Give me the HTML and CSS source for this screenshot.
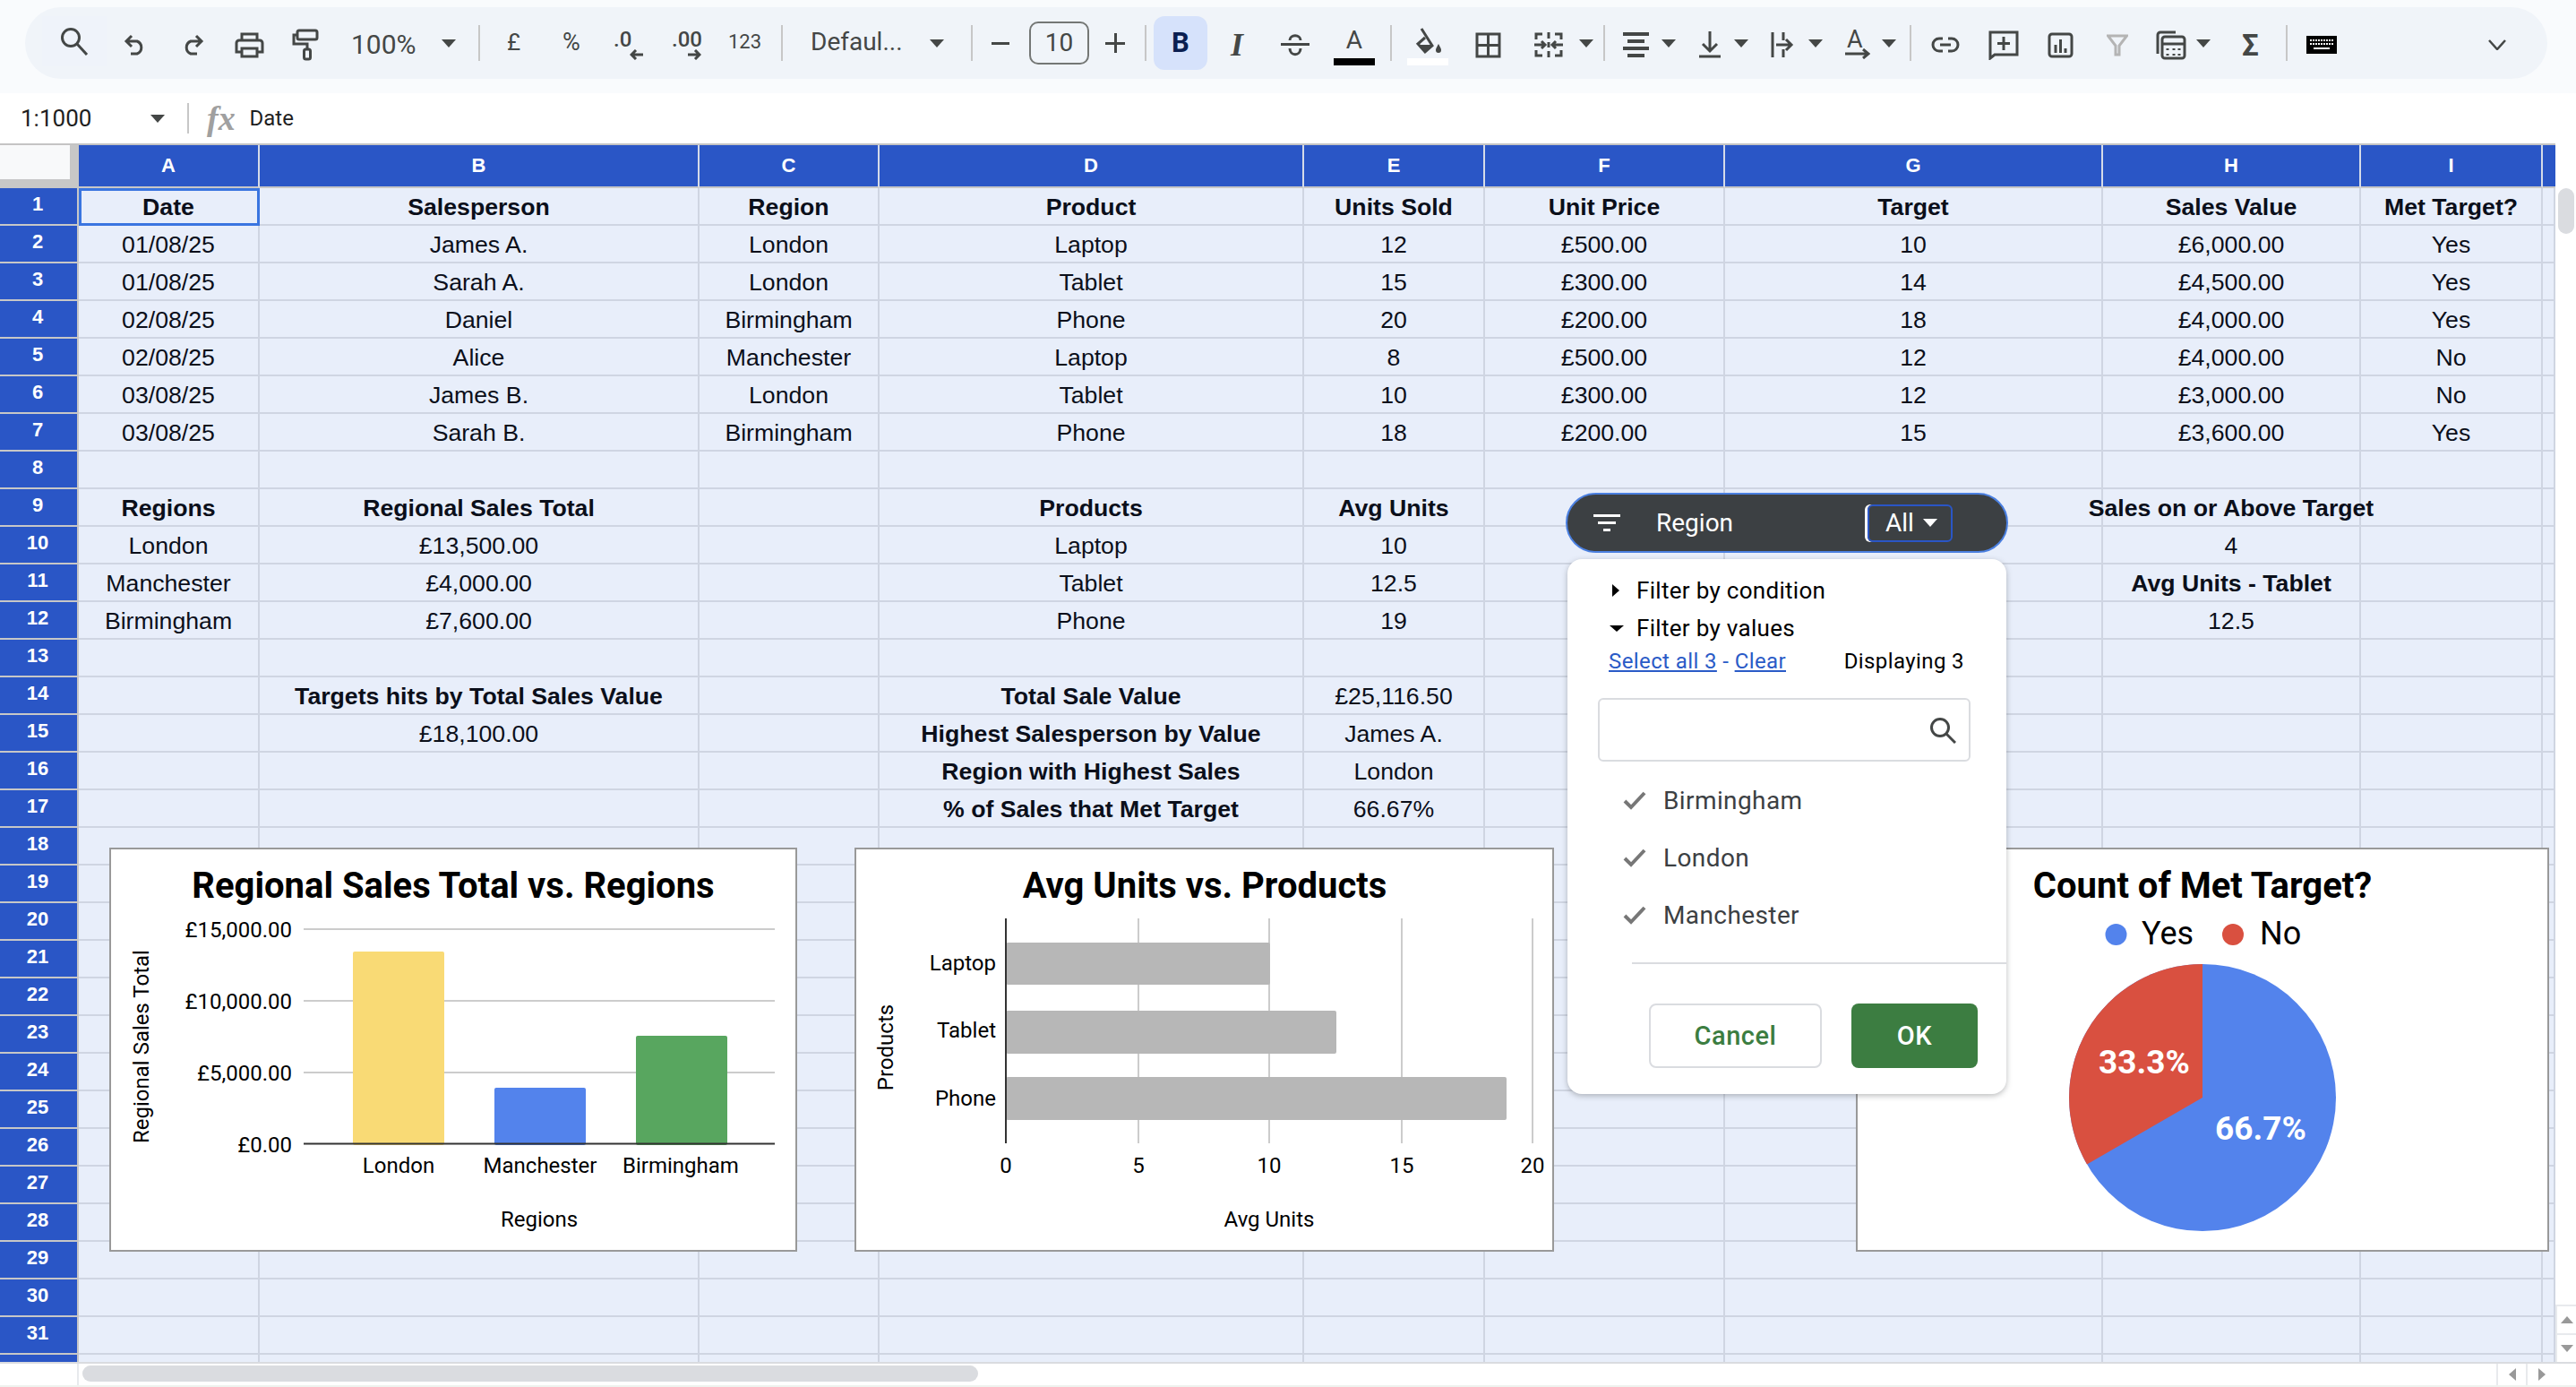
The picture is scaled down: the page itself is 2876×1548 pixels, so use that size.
FILE: index.html
```html
<!DOCTYPE html>
<html lang="en">
<head>
    <meta charset="UTF-8">
    <title>Sales Sheet</title>
    <link rel="stylesheet" href="styles.css">
</head>
<body>
    <div class="top">
        <div class="toolbar">
            <span class="ti search-btn"><svg class="ic" width="32" height="32" viewBox="0 0 32 32"><circle cx="12" cy="12" r="9.5"/><path d="M19 19l11 12"/></svg></span>
            <span class="ti"><svg class="ic" width="26" height="24" viewBox="0 0 26 24"><path d="M9 2L3 8l6 6M3 8h12a7.500 7.500 0 0 1 0 14H8"/></svg></span>
            <span class="ti"><svg class="ic" width="26" height="24" viewBox="0 0 26 24"><path d="M17 2l6 6-6 6M23 8H11a7.500 7.500 0 0 0 0 14h7"/></svg></span>
            <span class="ti"><svg class="ic" width="33" height="29" viewBox="0 0 33 29"><path d="M8 9V2h17v7M8 22H2V12a3 3 0 0 1 3-3h23a3 3 0 0 1 3 3v10h-6M8 18h17v9H8z"/></svg></span>
            <span class="ti"><svg class="ic" width="30" height="36" viewBox="0 0 30 36"><rect x="6" y="2" width="22" height="10" rx="2"/><path d="M6 7H2v10h15v6"/><rect x="13.500" y="23" width="7" height="11" rx="2"/></svg></span>
            <span class="ti tx zoom">100%</span>
            <span class="caret"></span>
            <span class="sep"></span>
            <span class="ti tx sm">£</span>
            <span class="ti tx pct">%</span>
            <span class="ti dec"><span class="dec-tx">.0</span><svg class="ic arr-left" width="16" height="12" viewBox="0 0 16 12"><path d="M15 6H3M7 1L2 6l5 5"/></svg></span>
            <span class="ti dec"><span class="dec-tx">.00</span><svg class="ic arr-right" width="16" height="12" viewBox="0 0 16 12"><path d="M1 6h12M9 1l5 5-5 5"/></svg></span>
            <span class="ti tx num">123</span>
            <span class="sep"></span>
            <span class="ti tx font-name">Defaul...</span>
            <span class="caret"></span>
            <span class="sep"></span>
            <span class="minus"></span>
            <span class="size-box">10</span>
            <span class="ti plus"></span>
            <span class="sep"></span>
            <span class="bold-btn">B</span>
            <span class="ti italic-i">I</span>
            <span class="ti"><svg class="ic" width="32" height="26" viewBox="0 0 32 26"><path d="M0 12.500h32M10 8c0-7 12-7 12 0M10 17c0 9 12 9 12 0"/></svg></span>
            <span class="color-btn"><span class="color-a">A</span><span class="color-bar black"></span></span>
            <span class="sep"></span>
            <span class="color-btn"><svg class="bucket" width="32" height="30" viewBox="0 0 32 30"><path d="M9 1l12 19-8 7-8-9 8-7" fill="none" stroke="#444746" stroke-width="3"/><path d="M6 19h14l-7 8zM28 18c2 4 3 5 3 7a3 3 0 0 1-6 0c0-2 1-3 3-7z" fill="#444746"/></svg><span class="color-bar white"></span></span>
            <span class="ti"><svg class="ic" width="29" height="29" viewBox="0 0 29 29"><path d="M2 2h25v25H2zM14.500 2v25M2 14.500h25"/></svg></span>
            <span class="ti"><svg class="ic" width="32" height="28" viewBox="0 0 32 28"><path d="M9 2H2v6M2 20v6h7M23 2h7v6M30 20v6h-7M16 0v7M16 11v6M16 21v7M0 14h12M8 10l4 4-4 4M32 14H20M24 10l-4 4 4 4"/></svg></span>
            <span class="caret"></span>
            <span class="sep"></span>
            <span class="ti"><svg class="ic" width="29" height="28" viewBox="0 0 29 28"><path d="M0 2h29M5 10h19M0 18h29M5 26h19" stroke-width="4"/></svg></span>
            <span class="caret"></span>
            <span class="ti"><svg class="ic" width="24" height="30" viewBox="0 0 24 30"><path d="M12 0v22M4 14l8 8 8-8M0 28h24"/></svg></span>
            <span class="caret"></span>
            <span class="ti"><svg class="ic" width="26" height="28" viewBox="0 0 26 28"><path d="M2 0v28M14 0v9M14 19v9M6 14h17M17 8l6 6-6 6"/></svg></span>
            <span class="caret"></span>
            <span class="ti rotate"><span class="rotate-a">A</span><svg class="ic" width="28" height="12" viewBox="0 0 28 12"><path d="M0 6h25M20 1l6 5-6 5"/></svg></span>
            <span class="caret"></span>
            <span class="sep"></span>
            <span class="ti"><svg class="ic" width="32" height="18" viewBox="0 0 32 18"><path d="M13 2H9a7 7 0 0 0 0 14h4M19 2h4a7 7 0 0 1 0 14h-4M10 9h12"/></svg></span>
            <span class="ti"><svg class="ic" width="34" height="33" viewBox="0 0 34 33"><path d="M2 31V2h30v25H7zM17 7v15M10 14.500h14"/></svg></span>
            <span class="ti"><svg class="ic" width="29" height="29" viewBox="0 0 29 29"><rect x="2" y="2" width="25" height="25" rx="3"/><path d="M9 14v9M14.500 8v15M20 18v5"/></svg></span>
            <span class="ti"><svg class="ic off" width="24" height="25" viewBox="0 0 24 25"><path d="M1.500 2h21L14 13v10h-4V13z"/></svg></span>
            <span class="ti"><svg class="ic" width="34" height="33" viewBox="0 0 34 33"><path d="M2 26V5a3 3 0 0 1 3-3h17"/><rect x="7" y="7" width="25" height="24" rx="3"/><path d="M7 15h25M13 20v2M20 20v2M26 20v2M13 26v2M20 26v2M26 26v2"/></svg></span>
            <span class="caret"></span>
            <span class="ti sigma">Σ</span>
            <span class="sep"></span>
            <span class="ti"><svg width="34" height="20" viewBox="0 0 34 20"><rect width="34" height="20" fill="#000"/><path d="M4 5h26M4 9h26" stroke="#fff" stroke-width="2" stroke-dasharray="2 1"/><path d="M8 14h18" stroke="#fff" stroke-width="2"/></svg></span>
            <span class="ti"><svg class="ic thin" width="20" height="12" viewBox="0 0 20 12"><path d="M1 1l9 10 9-10"/></svg></span>
        </div>
    </div>

    <div class="formula">
        <span class="range">1:1000</span>
        <span class="caret"></span>
        <span class="fsep"></span>
        <span class="fx">fx</span>
        <span class="fvalue">Date</span>
    </div>

    <div class="sheet-row">
        <div class="sheet">
            <table class="grid">
                <colgroup>
                    <col class="c-r"><col class="c-a"><col class="c-b"><col class="c-c"><col class="c-d"><col class="c-e"><col class="c-f"><col class="c-g"><col class="c-h"><col class="c-i"><col class="c-j">
                </colgroup>
                <thead>
                    <tr><th class="corner"><div class="corner-in"></div></th><th>A</th><th>B</th><th>C</th><th>D</th><th>E</th><th>F</th><th>G</th><th>H</th><th>I</th><th></th></tr>
                </thead>
                <tbody>
                    <tr class="hd"><th>1</th><td class="selected">Date</td><td>Salesperson</td><td>Region</td><td>Product</td><td>Units Sold</td><td>Unit Price</td><td>Target</td><td>Sales Value</td><td>Met Target?</td><td></td></tr>
                    <tr><th>2</th><td>01/08/25</td><td>James A.</td><td>London</td><td>Laptop</td><td>12</td><td>£500.00</td><td>10</td><td>£6,000.00</td><td>Yes</td><td></td></tr>
                    <tr><th>3</th><td>01/08/25</td><td>Sarah A.</td><td>London</td><td>Tablet</td><td>15</td><td>£300.00</td><td>14</td><td>£4,500.00</td><td>Yes</td><td></td></tr>
                    <tr><th>4</th><td>02/08/25</td><td>Daniel</td><td>Birmingham</td><td>Phone</td><td>20</td><td>£200.00</td><td>18</td><td>£4,000.00</td><td>Yes</td><td></td></tr>
                    <tr><th>5</th><td>02/08/25</td><td>Alice</td><td>Manchester</td><td>Laptop</td><td>8</td><td>£500.00</td><td>12</td><td>£4,000.00</td><td>No</td><td></td></tr>
                    <tr><th>6</th><td>03/08/25</td><td>James B.</td><td>London</td><td>Tablet</td><td>10</td><td>£300.00</td><td>12</td><td>£3,000.00</td><td>No</td><td></td></tr>
                    <tr><th>7</th><td>03/08/25</td><td>Sarah B.</td><td>Birmingham</td><td>Phone</td><td>18</td><td>£200.00</td><td>15</td><td>£3,600.00</td><td>Yes</td><td></td></tr>
                    <tr><th>8</th><td></td><td></td><td></td><td></td><td></td><td></td><td></td><td></td><td></td><td></td></tr>
                    <tr class="hd"><th>9</th><td>Regions</td><td>Regional Sales Total</td><td></td><td>Products</td><td>Avg Units</td><td></td><td></td><td class="spill"><div>Sales on or Above Target</div></td><td></td><td></td></tr>
                    <tr><th>10</th><td>London</td><td>£13,500.00</td><td></td><td>Laptop</td><td>10</td><td></td><td></td><td>4</td><td></td><td></td></tr>
                    <tr><th>11</th><td>Manchester</td><td>£4,000.00</td><td></td><td>Tablet</td><td>12.5</td><td></td><td></td><td class="b">Avg Units - Tablet</td><td></td><td></td></tr>
                    <tr><th>12</th><td>Birmingham</td><td>£7,600.00</td><td></td><td>Phone</td><td>19</td><td></td><td></td><td>12.5</td><td></td><td></td></tr>
                    <tr><th>13</th><td></td><td></td><td></td><td></td><td></td><td></td><td></td><td></td><td></td><td></td></tr>
                    <tr><th>14</th><td></td><td class="b">Targets hits by Total Sales Value</td><td></td><td class="b">Total Sale Value</td><td>£25,116.50</td><td></td><td></td><td></td><td></td><td></td></tr>
                    <tr><th>15</th><td></td><td>£18,100.00</td><td></td><td class="b">Highest Salesperson by Value</td><td>James A.</td><td></td><td></td><td></td><td></td><td></td></tr>
                    <tr><th>16</th><td></td><td></td><td></td><td class="b">Region with Highest Sales</td><td>London</td><td></td><td></td><td></td><td></td><td></td></tr>
                    <tr><th>17</th><td></td><td></td><td></td><td class="b">% of Sales that Met Target</td><td>66.67%</td><td></td><td></td><td></td><td></td><td></td></tr>
                    <tr><th>18</th><td></td><td></td><td></td><td></td><td></td><td></td><td></td><td></td><td></td><td></td></tr>
                    <tr><th>19</th><td></td><td></td><td></td><td></td><td></td><td></td><td></td><td></td><td></td><td></td></tr>
                    <tr><th>20</th><td></td><td></td><td></td><td></td><td></td><td></td><td></td><td></td><td></td><td></td></tr>
                    <tr><th>21</th><td></td><td></td><td></td><td></td><td></td><td></td><td></td><td></td><td></td><td></td></tr>
                    <tr><th>22</th><td></td><td></td><td></td><td></td><td></td><td></td><td></td><td></td><td></td><td></td></tr>
                    <tr><th>23</th><td></td><td></td><td></td><td></td><td></td><td></td><td></td><td></td><td></td><td></td></tr>
                    <tr><th>24</th><td></td><td></td><td></td><td></td><td></td><td></td><td></td><td></td><td></td><td></td></tr>
                    <tr><th>25</th><td></td><td></td><td></td><td></td><td></td><td></td><td></td><td></td><td></td><td></td></tr>
                    <tr><th>26</th><td></td><td></td><td></td><td></td><td></td><td></td><td></td><td></td><td></td><td></td></tr>
                    <tr><th>27</th><td></td><td></td><td></td><td></td><td></td><td></td><td></td><td></td><td></td><td></td></tr>
                    <tr><th>28</th><td></td><td></td><td></td><td></td><td></td><td></td><td></td><td></td><td></td><td></td></tr>
                    <tr><th>29</th><td></td><td></td><td></td><td></td><td></td><td></td><td></td><td></td><td></td><td></td></tr>
                    <tr><th>30</th><td></td><td></td><td></td><td></td><td></td><td></td><td></td><td></td><td></td><td></td></tr>
                    <tr><th>31</th><td></td><td></td><td></td><td></td><td></td><td></td><td></td><td></td><td></td><td></td></tr>
                    <tr><th></th><td></td><td></td><td></td><td></td><td></td><td></td><td></td><td></td><td></td><td></td></tr>
                </tbody>
            </table>

            <!-- charts sit on top of the cells, svg coords are page px -->
            <div class="chart chart-1">
                <svg width="764" height="447" viewBox="124 948 764 447">
                    <text class="ch-title" x="506" y="1002">Regional Sales Total vs. Regions</text>
                    <path class="ch-grid" d="M339 1037H865M339 1117H865M339 1197H865"/>
                    <rect x="394" y="1062" width="102" height="216" rx="2" fill="#f9da75"/>
                    <rect x="552" y="1214" width="102" height="64" rx="2" fill="#5383ec"/>
                    <rect x="710" y="1156" width="102" height="122" rx="2" fill="#58a65f"/>
                    <path class="ch-axis" d="M339 1276.500H865"/>
                    <text class="ch-label end" x="326" y="1046">£15,000.00</text>
                    <text class="ch-label end" x="326" y="1126">£10,000.00</text>
                    <text class="ch-label end" x="326" y="1206">£5,000.00</text>
                    <text class="ch-label end" x="326" y="1286">£0.00</text>
                    <text class="ch-label mid" x="445" y="1309">London</text>
                    <text class="ch-label mid" x="603" y="1309">Manchester</text>
                    <text class="ch-label mid" x="760" y="1309">Birmingham</text>
                    <text class="ch-label mid" x="602" y="1369">Regions</text>
                    <text class="ch-label mid" x="166" y="1168" transform="rotate(-90 166 1168)">Regional Sales Total</text>
                </svg>
            </div>

            <div class="chart chart-2">
                <svg width="777" height="447" viewBox="956 948 777 447">
                    <text class="ch-title" x="1345" y="1002">Avg Units vs. Products</text>
                    <path class="ch-grid" d="M1271 1025V1276M1417 1025V1276M1565 1025V1276M1711 1025V1276"/>
                    <rect x="1123" y="1052" width="295" height="47" rx="2" fill="#b7b7b7"/>
                    <rect x="1123" y="1128" width="369" height="48" rx="2" fill="#b7b7b7"/>
                    <rect x="1123" y="1202" width="559" height="48" rx="2" fill="#b7b7b7"/>
                    <path class="ch-axis" d="M1123 1025V1276"/>
                    <text class="ch-label end" x="1112" y="1083">Laptop</text>
                    <text class="ch-label end" x="1112" y="1158">Tablet</text>
                    <text class="ch-label end" x="1112" y="1234">Phone</text>
                    <text class="ch-label mid" x="1123" y="1309">0</text>
                    <text class="ch-label mid" x="1271" y="1309">5</text>
                    <text class="ch-label mid" x="1417" y="1309">10</text>
                    <text class="ch-label mid" x="1565" y="1309">15</text>
                    <text class="ch-label mid" x="1711" y="1309">20</text>
                    <text class="ch-label mid" x="1417" y="1369">Avg Units</text>
                    <text class="ch-label mid" x="997" y="1169" transform="rotate(-90 997 1169)">Products</text>
                </svg>
            </div>

            <div class="chart chart-3">
                <svg width="770" height="447" viewBox="2074 948 770 447">
                    <text class="ch-title" x="2459" y="1002">Count of Met Target?</text>
                    <circle cx="2362.500" cy="1043" r="12" fill="#5383ec"/>
                    <text class="ch-legend" x="2391" y="1054">Yes</text>
                    <circle cx="2493" cy="1043" r="12" fill="#d95040"/>
                    <text class="ch-legend" x="2523" y="1054">No</text>
                    <circle cx="2459" cy="1225" r="149" fill="#5383ec"/>
                    <path d="M2459 1225V1076A149 149 0 0 0 2330 1299.500Z" fill="#d95040"/>
                    <text class="ch-pct" x="2394" y="1198">33.3%</text>
                    <text class="ch-pct" x="2524" y="1272">66.7%</text>
                </svg>
            </div>

            <div class="filter-bar">
                <svg class="filter-ic" width="30" height="20" viewBox="0 0 30 20"><path d="M0 0h30v3H0zM5 8h20v3H5zM11 16h8v3h-8z" fill="#fff"/></svg>
                <span class="filter-col">Region</span>
                <span class="filter-all">All<span class="caret white-caret"></span></span>
            </div>

            <div class="filter-popup">
                <div class="f-row"><span class="tri-right"></span>Filter by condition</div>
                <div class="f-row"><span class="tri-down"></span>Filter by values</div>
                <div class="f-links">
                    <span><a href="#">Select all 3</a> - <a href="#">Clear</a></span>
                    <span class="f-count">Displaying 3</span>
                </div>
                <div class="f-search">
                    <svg class="ic search-sm" width="30" height="30" viewBox="0 0 30 30"><circle cx="12" cy="12" r="9.500"/><path d="M19 19l10 10"/></svg>
                </div>
                <div class="f-item"><svg class="check" width="26" height="22" viewBox="0 0 26 22"><path d="M2 12l7 7L24 3"/></svg>Birmingham</div>
                <div class="f-item"><svg class="check" width="26" height="22" viewBox="0 0 26 22"><path d="M2 12l7 7L24 3"/></svg>London</div>
                <div class="f-item"><svg class="check" width="26" height="22" viewBox="0 0 26 22"><path d="M2 12l7 7L24 3"/></svg>Manchester</div>
                <div class="f-divider"></div>
                <div class="f-actions">
                    <button class="btn-cancel">Cancel</button>
                    <button class="btn-ok">OK</button>
                </div>
            </div>
        </div>
        <div class="vscroll">
            <div class="vthumb"></div>
            <div class="sbtn"><span class="tri-up"></span></div>
            <div class="sbtn"><span class="caret grey-caret"></span></div>
        </div>
    </div>

    <div class="bottom">
        <div class="bottom-corner"></div>
        <div class="hthumb"></div>
        <div class="hbtn"><span class="tri-left"></span></div>
        <div class="hbtn"><span class="tri-right grey-tri"></span></div>
    </div>
</body>
</html>
```

FILE: styles.css
```css
* {
    box-sizing: border-box;
}
html, body {
    margin: 0;
    padding: 0;
}
body {
    width: 2876px;
    height: 1548px;
    overflow: hidden;
    background-color: #fff;
    font-family: Roboto, "Liberation Sans", sans-serif;
    color: #444746;
}

/* toolbar */
.top {
    height: 104px;
    padding: 8px 32px 0 28px;
    background-color: #f9fbfd;
}
.toolbar {
    height: 80px;
    padding-left: 19px;
    border-radius: 40px;
    background-color: #f0f4f9;
    display: grid;
    grid-template-columns: 91px 64px 60px 64px 66px 101px 41px 32px 62px 57px 65px 63px 59px 33px 133px 46px 23px 42px 85px 44px 10px 83px 59px 59px 63px 19px 76px 66px 50px 27px 22px 43px 42px 39px 41px 42px 41px 41px 31px 24px 64px 66px 66px 55px 45px 51px 49px 23px 203px 1fr;
    align-items: center;
    justify-items: start;
}
.toolbar > * {
    margin-top: 4px;
}
.ti {
    display: flex;
    align-items: center;
}
.ic {
    display: block;
    fill: none;
    stroke: #444746;
    stroke-width: 3;
}
.ic.off {
    stroke: #b4b4b4;
}
.ic.thin {
    stroke-width: 2.5;
}
.search-btn {
    width: 73px;
    height: 56px;
    margin-top: -4px;
    padding-left: 20px;
    background-color: #eff3fa;
}
.tx {
    white-space: nowrap;
    line-height: 1;
}
.zoom {
    font-size: 30px;
}
.toolbar > .sm {
    font-size: 26px;
    margin-top: -2px;
}
.toolbar > .pct {
    font-size: 27px;
    margin-top: -2px;
}
.toolbar > .num {
    font-size: 22px;
    margin-top: -2px;
}
.toolbar > .font-name {
    font-size: 28px;
    margin-top: -2px;
}
.caret {
    display: block;
    width: 0;
    height: 0;
    border-left: 8px solid transparent;
    border-right: 8px solid transparent;
    border-top: 9px solid #444746;
}
.toolbar > .caret {
    margin-top: 0;
}
.sep {
    width: 2px;
    height: 40px;
    background-color: #c7c7c7;
}
.toolbar > .sep {
    margin-top: 0;
}
.dec {
    flex-direction: column;
    align-items: flex-start;
}
.dec-tx {
    font-size: 24px;
    line-height: 22px;
    font-weight: 500;
}
.arr-left, .arr-right {
    margin-left: 18px;
}
.arr-right {
    margin-left: 17px;
}
.minus {
    width: 20px;
    height: 3px;
}
.toolbar > .minus {
    margin-top: 0;
    background-color: #444746;
}
.size-box {
    width: 67px;
    height: 48px;
    border: 2px solid #747775;
    border-radius: 10px;
    font-size: 28px;
    line-height: 44px;
    text-align: center;
}
.toolbar > .size-box {
    margin-top: 0;
}
.toolbar > .plus {
    margin-top: 0;
    width: 22px;
    height: 22px;
    background: linear-gradient(#444746, #444746) center / 22px 3px no-repeat, linear-gradient(#444746, #444746) center / 3px 22px no-repeat;
}
.toolbar > .bold-btn {
    margin-top: 0;
    width: 60px;
    height: 60px;
    border-radius: 12px;
    background-color: #d6e2fb;
    color: #0b1f51;
    font-size: 31px;
    font-weight: 700;
    line-height: 60px;
    text-align: center;
}
.toolbar > .italic-i {
    margin-left: 3px;
    font-family: "Liberation Serif", serif;
    font-style: italic;
    font-weight: 700;
    font-size: 36px;
    line-height: 1;
}
.toolbar > .color-btn {
    width: 46px;
    height: 41px;
    margin-top: 8px;
    display: flex;
    flex-direction: column;
    align-items: center;
    justify-content: flex-end;
}
.color-a {
    font-size: 28px;
    line-height: 26px;
    padding-bottom: 7px;
}
.color-bar {
    width: 46px;
    height: 8px;
    flex: none;
}
.color-bar.black {
    background-color: #000;
}
.color-bar.white {
    background-color: #fff;
}
.bucket {
    flex: none;
    margin-bottom: 4px;
}
.rotate {
    flex-direction: column;
    align-items: flex-start;
}
.rotate-a {
    font-size: 27px;
    line-height: 20px;
    margin-left: 2px;
}
.sigma {
    font-size: 33px;
    font-weight: 700;
    line-height: 1;
}

/* formula bar */
.formula {
    height: 56px;
    display: flex;
    align-items: center;
    background-color: #fff;
    color: #1f1f1f;
}
.range {
    margin-left: 23px;
    width: 145px;
    font-size: 26px;
}
.fsep {
    width: 2px;
    height: 34px;
    margin-left: 25px;
    background-color: #c7c7c7;
}
.fx {
    margin-left: 20px;
    width: 47.500px;
    font-family: "Liberation Serif", serif;
    font-style: italic;
    font-weight: 700;
    font-size: 38px;
    color: #a0a0a0;
}
.fvalue {
    font-size: 24px;
}

/* sheet grid */
.sheet-row {
    display: flex;
    height: 1360px;
}
.sheet {
    position: relative;
    width: 2853px;
    height: 1360px;
    overflow: hidden;
    border-top: 2px solid #c4c4c4;
}
.grid {
    table-layout: fixed;
    width: 2853px;
    border-collapse: separate;
    border-spacing: 0;
    font-family: "Liberation Sans", Arial, sans-serif;
    font-size: 26.67px;
    color: #0b0f1a;
}
.c-r { width: 88px; }
.c-a { width: 202px; }
.c-b { width: 491px; }
.c-c { width: 201px; }
.c-d { width: 474px; }
.c-e { width: 202px; }
.c-f { width: 268px; }
.c-g { width: 422px; }
.c-h { width: 288px; }
.c-i { width: 203px; }
.c-j { width: 14px; }
.grid thead th {
    height: 48px;
    padding: 0 0 1px;
    background-color: #2a56c6;
    color: #fff;
    font-size: 22px;
    font-weight: 700;
    border-right: 2px solid #d5dbe8;
    border-bottom: 2px solid #c7c7c7;
}
.grid thead th:last-child {
    border-right: none;
}
.grid thead th.corner {
    padding: 0;
    background-color: #c7c7c7;
    border: none;
    vertical-align: top;
}
.corner-in {
    width: 78px;
    height: 38px;
    background-color: #f8f9fa;
}
.grid tbody th {
    height: 42px;
    padding: 0 2px 4px 0;
    background-color: #2a56c6;
    color: #fff;
    font-size: 22px;
    font-weight: 700;
    border-right: 2px solid #c7c7c7;
    border-bottom: 2px solid #c7c7c7;
}
.grid td {
    height: 42px;
    padding: 1px 0 0;
    background-color: #e8eefa;
    border-right: 2px solid #cfd5e2;
    border-bottom: 2px solid #cfd5e2;
    text-align: center;
    white-space: nowrap;
    line-height: 38px;
}
.grid .hd td, .grid td.b, .grid td.spill {
    font-weight: 700;
}
.grid td.selected {
    outline: 3px solid #3a75e0;
    outline-offset: -3px;
}
.spill div {
    margin: 0 -40px;
}

/* charts */
.chart {
    position: absolute;
    top: 784px;
    height: 451px;
    border: 2px solid #999;
    background-color: #fff;
}
.chart svg {
    display: block;
}
.chart-1 {
    left: 122px;
    width: 768px;
}
.chart-2 {
    left: 954px;
    width: 781px;
}
.chart-3 {
    left: 2072px;
    width: 774px;
}
.ch-title {
    font-size: 40px;
    font-weight: 700;
    text-anchor: middle;
    fill: #000;
}
.ch-grid {
    stroke: #ccc;
    stroke-width: 2;
    fill: none;
}
.ch-axis {
    stroke: #333;
    stroke-width: 2;
    fill: none;
}
.ch-label {
    font-size: 24px;
    fill: #000;
}
.ch-label.end {
    text-anchor: end;
}
.ch-label.mid {
    text-anchor: middle;
}
.ch-legend {
    font-size: 36px;
    fill: #000;
}
.ch-pct {
    font-size: 37px;
    font-weight: 700;
    text-anchor: middle;
    fill: #fff;
}

/* filter dropdown */
.filter-bar {
    position: absolute;
    left: 1748px;
    top: 388px;
    width: 494px;
    height: 67px;
    display: flex;
    align-items: center;
    padding-left: 29px;
    border: 2px solid #4a7fe0;
    border-radius: 34px;
    background-color: #3c4043;
    color: #fff;
}
.filter-col {
    margin-left: 40px;
    font-size: 28px;
}
.filter-all {
    margin-left: auto;
    margin-right: 60px;
    width: 95px;
    height: 42px;
    padding-left: 3px;
    display: flex;
    align-items: center;
    justify-content: center;
    gap: 10px;
    border: 2px solid #2a56c6;
    border-radius: 6px;
    box-shadow: -3px 0 0 #fff;
    font-size: 28px;
}
.white-caret {
    border-top-color: #fff;
}
.filter-popup {
    position: absolute;
    left: 1750px;
    top: 462px;
    width: 490px;
    height: 597px;
    padding-top: 14px;
    border-radius: 16px;
    background-color: #fff;
    box-shadow: 0 2px 6px rgba(60, 64, 67, 0.35);
    color: #000;
}
.f-row {
    height: 42px;
    padding-left: 47px;
    display: flex;
    align-items: center;
    font-size: 26px;
    letter-spacing: 0.3px;
}
.tri-right, .tri-left {
    display: block;
    width: 0;
    height: 0;
    border-top: 7px solid transparent;
    border-bottom: 7px solid transparent;
}
.tri-right {
    border-left: 8px solid #000;
}
.f-row .tri-right {
    margin: 0 19px 0 3px;
}
.tri-down {
    display: block;
    width: 0;
    height: 0;
    margin-right: 14px;
    border-left: 8px solid transparent;
    border-right: 8px solid transparent;
    border-top: 7px solid #000;
}
.f-links {
    height: 32px;
    padding: 0 47px 0 46px;
    display: flex;
    align-items: center;
    justify-content: space-between;
    font-size: 24px;
    letter-spacing: 0.4px;
    color: #2a5bc7;
}
.f-links a {
    color: #2a5bc7;
}
.f-count {
    color: #000;
}
.f-search {
    height: 71px;
    margin: 25px 40px 0 34px;
    padding-right: 14px;
    display: flex;
    align-items: center;
    justify-content: flex-end;
    border: 2px solid #dadce0;
    border-radius: 6px;
}
.f-item {
    height: 64px;
    padding-left: 62px;
    display: flex;
    align-items: center;
    gap: 19px;
    font-size: 28px;
    letter-spacing: 0.4px;
    color: #3c4043;
}
.f-search + .f-item {
    margin-top: 11px;
}
.check {
    fill: none;
    stroke: #777;
    stroke-width: 4;
}
.f-divider {
    height: 2px;
    margin: 21px 0 0 72px;
    background-color: #dadce0;
}
.f-actions {
    margin: 44px 0 0 91px;
    display: flex;
    gap: 33px;
}
.f-actions button {
    height: 72px;
    border-radius: 8px;
    font-family: Roboto, sans-serif;
    font-size: 29px;
    font-weight: 500;
    letter-spacing: 0.5px;
    cursor: pointer;
}
.btn-cancel {
    width: 193px;
    border: 2px solid #dadce0;
    background-color: #fff;
    color: #3c7d41;
}
.btn-ok {
    width: 141px;
    border: none;
    background-color: #3c7d41;
    color: #fff;
}

/* scrollbars */
.vscroll {
    width: 23px;
    display: flex;
    flex-direction: column;
}
.vthumb {
    width: 18px;
    height: 51px;
    margin: 50px 0 0 3px;
    border-radius: 9px;
    background-color: #dadce0;
}
.sbtn {
    height: 32px;
    display: flex;
    align-items: center;
    justify-content: center;
    border-top: 2px solid #e8eaed;
    border-left: 2px solid #e8eaed;
}
.vthumb + .sbtn {
    margin-top: auto;
}
.tri-up {
    display: block;
    width: 0;
    height: 0;
    border-left: 7px solid transparent;
    border-right: 7px solid transparent;
    border-bottom: 8px solid #999;
}
.grey-caret {
    border-left-width: 7px;
    border-right-width: 7px;
    border-top-width: 8px;
    border-top-color: #999;
}
.bottom {
    height: 28px;
    display: flex;
    align-items: flex-start;
    border-top: 2px solid #dadce0;
    border-bottom: 2px solid #eef2ee;
}
.bottom-corner {
    width: 88px;
    height: 24px;
    border-right: 2px solid #e8eaed;
}
.hthumb {
    width: 1000px;
    height: 18px;
    margin: 2px 0 0 4px;
    border-radius: 9px;
    background-color: #dadce0;
}
.hbtn {
    width: 33px;
    height: 24px;
    display: flex;
    align-items: center;
    justify-content: center;
    border-left: 2px solid #e8eaed;
}
.hthumb + .hbtn {
    margin-left: auto;
}
.hbtn:last-child {
    margin-right: 23px;
}
.tri-left {
    border-right: 8px solid #999;
}
.grey-tri {
    border-left-color: #999;
}
```
